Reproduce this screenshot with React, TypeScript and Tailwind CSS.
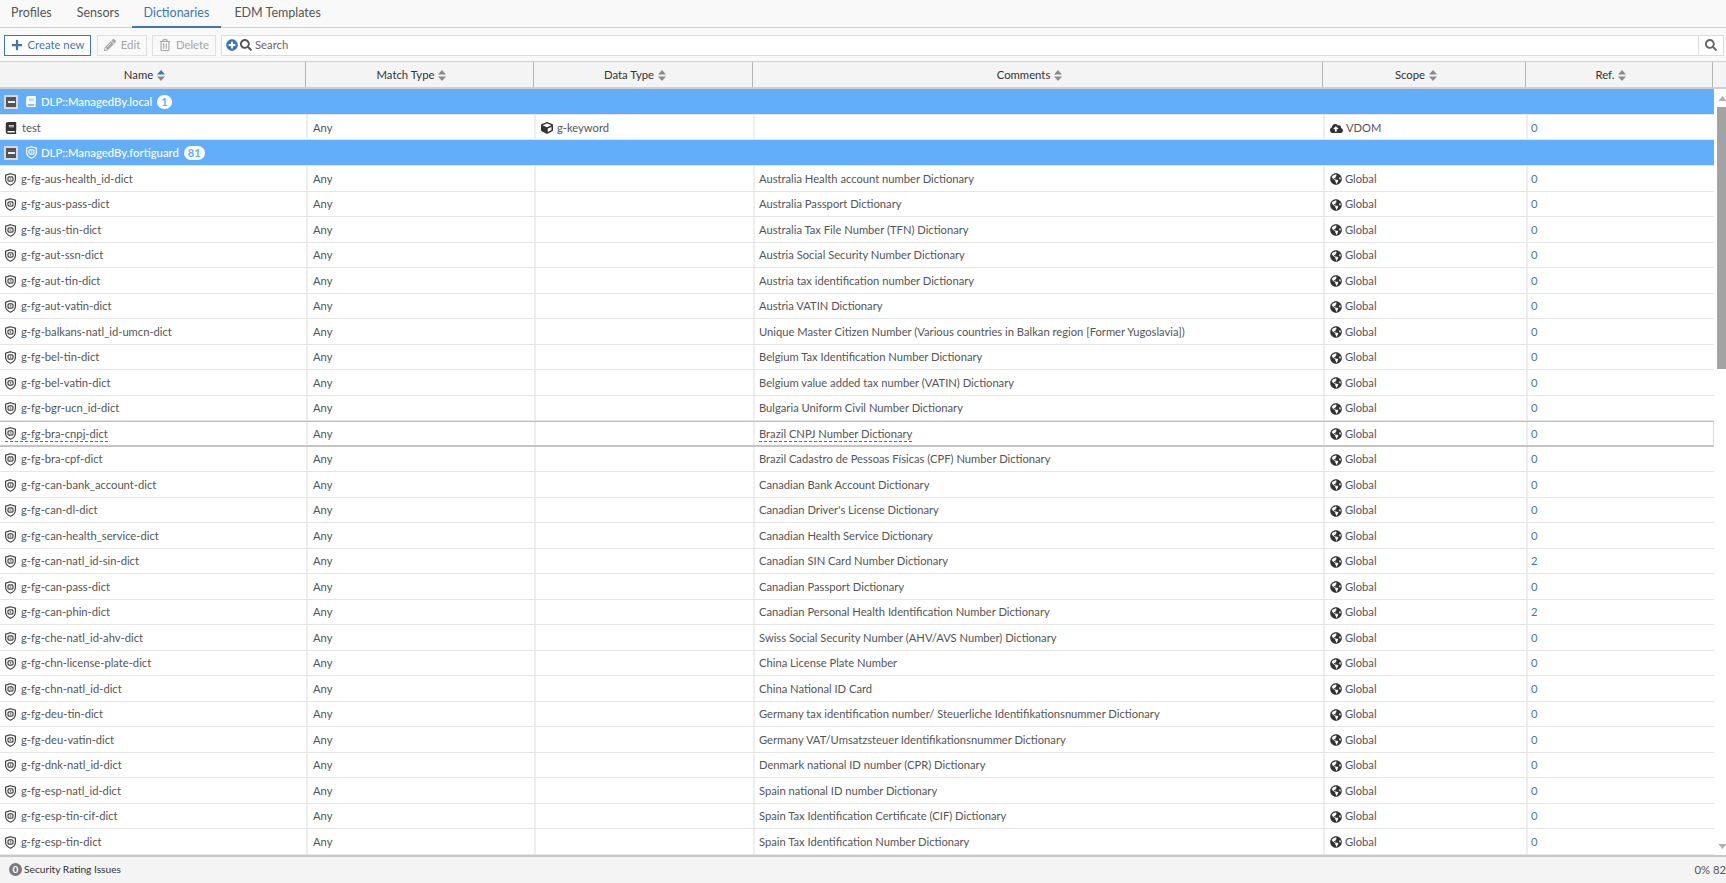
import React from "react";
import { FaPlus, FaPencilAlt, FaRegTrashAlt, FaSearch, FaPlusCircle, FaGlobeAmericas, FaBook, FaCube, FaCloudUploadAlt } from "react-icons/fa";

const rows: [string, string, string?][] = [
  ["g-fg-aus-health_id-dict", "Australia Health account number Dictionary"],
  ["g-fg-aus-pass-dict", "Australia Passport Dictionary"],
  ["g-fg-aus-tin-dict", "Australia Tax File Number (TFN) Dictionary"],
  ["g-fg-aut-ssn-dict", "Austria Social Security Number Dictionary"],
  ["g-fg-aut-tin-dict", "Austria tax identification number Dictionary"],
  ["g-fg-aut-vatin-dict", "Austria VATIN Dictionary"],
  ["g-fg-balkans-natl_id-umcn-dict", "Unique Master Citizen Number (Various countries in Balkan region [Former Yugoslavia])"],
  ["g-fg-bel-tin-dict", "Belgium Tax Identification Number Dictionary"],
  ["g-fg-bel-vatin-dict", "Belgium value added tax number (VATIN) Dictionary"],
  ["g-fg-bgr-ucn_id-dict", "Bulgaria Uniform Civil Number Dictionary"],
  ["g-fg-bra-cnpj-dict", "Brazil CNPJ Number Dictionary"],
  ["g-fg-bra-cpf-dict", "Brazil Cadastro de Pessoas Físicas (CPF) Number Dictionary"],
  ["g-fg-can-bank_account-dict", "Canadian Bank Account Dictionary"],
  ["g-fg-can-dl-dict", "Canadian Driver's License Dictionary"],
  ["g-fg-can-health_service-dict", "Canadian Health Service Dictionary"],
  ["g-fg-can-natl_id-sin-dict", "Canadian SIN Card Number Dictionary", "2"],
  ["g-fg-can-pass-dict", "Canadian Passport Dictionary"],
  ["g-fg-can-phin-dict", "Canadian Personal Health Identification Number Dictionary", "2"],
  ["g-fg-che-natl_id-ahv-dict", "Swiss Social Security Number (AHV/AVS Number) Dictionary"],
  ["g-fg-chn-license-plate-dict", "China License Plate Number"],
  ["g-fg-chn-natl_id-dict", "China National ID Card"],
  ["g-fg-deu-tin-dict", "Germany tax identification number/ Steuerliche Identifikationsnummer Dictionary"],
  ["g-fg-deu-vatin-dict", "Germany VAT/Umsatzsteuer Identifikationsnummer Dictionary"],
  ["g-fg-dnk-natl_id-dict", "Denmark national ID number (CPR) Dictionary"],
  ["g-fg-esp-natl_id-dict", "Spain national ID number Dictionary"],
  ["g-fg-esp-tin-cif-dict", "Spain Tax Identification Certificate (CIF) Dictionary"],
  ["g-fg-esp-tin-dict", "Spain Tax Identification Number Dictionary"],
];

const gridCols = "grid grid-cols-[306px_228px_219px_570px_203px_187px]";

function Sort({ active }: { active?: boolean }) {
  return (
    <svg width="8" height="11" viewBox="0 0 8 11" className="ml-1">
      <path d="M4 0 L8 4.6 H0 Z" fill={active ? "#3f77b0" : "#8a8a8a"} />
      <path d="M4 11 L8 6.4 H0 Z" fill="#8a8a8a" />
    </svg>
  );
}

function Shield({ color = "#444" }: { color?: string }) {
  return (
    <svg width="11" height="13" viewBox="0 0 11 13" className="shrink-0">
      <path d="M5.5 .7 L10.4 2.3 V6.3 C10.4 9.2 8.2 11.2 5.5 12.3 C2.8 11.2 .6 9.2 .6 6.3 V2.3 Z" fill="none" stroke={color} strokeWidth="1.2" />
      <rect x="3" y="3.9" width="5" height="4.2" rx="1" fill="none" stroke={color} strokeWidth="1.2" />
      <rect x="4.8" y="5.4" width="1.4" height="1.2" fill={color} />
    </svg>
  );
}

function Collapse() {
  return (
    <div className="w-[14px] h-[14px] border-2 border-[#d8d8d8] bg-[#555] flex items-center justify-center shrink-0">
      <div className="w-[7px] h-[2px] bg-[#eee]" />
    </div>
  );
}

function Group({ icon, label, count }: { icon: React.ReactNode; label: string; count: string }) {
  return (
    <div className="h-[26px] w-[1714px] bg-[#62aefa] border-b border-[#e6e6e6] flex items-center pl-1 text-white">
      <Collapse />
      <span className="ml-[8px] w-[10px] flex justify-center">{icon}</span>
      <span className="ml-[5px] text-[11.3px] pt-[1px] font-medium">{label}</span>
      <span className="ml-[5px] h-[14px] min-w-[14px] px-[4px] rounded-full bg-white text-[#62aefa] text-[11px] font-bold leading-[14px] text-center">{count}</span>
    </div>
  );
}

function Row({ name, icon, comment, scopeIcon, scope, refCount, dataType, h, hover }: { name: string; icon: React.ReactNode; comment?: string; scopeIcon: React.ReactNode; scope: string; refCount: string; dataType?: React.ReactNode; h: string; hover?: boolean }) {
  const cell = "flex items-center pt-[2px] border-l-2 border-[#eeeeee] overflow-hidden whitespace-nowrap";
  const lined = hover ? "border-b border-dashed border-[#666] leading-[14px]" : "";
  return (
    <div className={`${gridCols} ${h} bg-white text-[#555] text-[11.2px] ${hover ? "w-[1714px] border-t border-r border-b-2 border-t-[#bdbdbd] border-r-[#dcdcdc] border-b-[#c4c4c4]" : "border-b border-[#e6e6e6]"}`}>
      <div className="flex items-center pl-[5px] pt-[2px] overflow-hidden whitespace-nowrap"><span className={`flex items-center gap-[5px] ${lined}`}>{icon}{name}</span></div>
      <div className={`${cell} pl-[5px]`}>Any</div>
      <div className={`${cell} pl-[5px]`}>{dataType}</div>
      <div className={`${cell} pl-[4px]`}><span className={lined}>{comment}</span></div>
      <div className={`${cell} pl-[5px] gap-[3px]`}>{scopeIcon}{scope}</div>
      <div className={`${cell} pl-[3px] text-[#3f77b0]`}>{refCount}</div>
    </div>
  );
}

function Head({ label, active }: { label: string; active?: boolean }) {
  return (
    <div className="flex items-center justify-center pr-[16px] pt-[1px] border-r border-[#b5b5b5] text-[#333] text-[11.3px]">
      {label}<Sort active={active} />
    </div>
  );
}

function Btn({ children, on, w }: { children: React.ReactNode; on?: boolean; w: string }) {
  return (
    <div className={`h-[21px] flex items-center justify-center gap-[5px] border-[1.5px] text-[11.3px] shrink-0 ${w} ${on ? "border-[#3f77b0] text-[#3f77b0] bg-white" : "border-[#e0e0e0] text-[#a5a5a5]"}`}>
      {children}
    </div>
  );
}

export default function App() {
  return (
    <div className="w-[1726px] h-[883px] overflow-hidden bg-[#f9f9f9] flex flex-col font-['Lato',sans-serif] relative">
      <div className="h-[28px] border-b border-[#cfcfcf] flex text-[12.5px] text-[#555] shrink-0">
        <div className="pl-[11px] pr-[13px] flex items-center">Profiles</div>
        <div className="pl-[12px] pr-[12px] flex items-center">Sensors</div>
        <div className="px-[12px] flex items-center text-[#3f77b0] border-b-2 border-[#3f77b0] h-[28px]">Dictionaries</div>
        <div className="px-[13px] flex items-center">EDM Templates</div>
      </div>
      <div className="h-[34px] flex items-center pl-1 pr-[2px] pt-[1px] shrink-0 border-b border-[#cfcfcf]">
        <Btn on w="w-[87px]"><FaPlus size={12} />Create new</Btn>
        <div className="w-[6px]" />
        <Btn w="w-[50px]"><FaPencilAlt size={12} />Edit</Btn>
        <div className="w-[5px]" />
        <Btn w="w-[64px]"><FaRegTrashAlt size={12} />Delete</Btn>
        <div className="w-[5px]" />
        <div className="flex-1 h-[21px] border-[1.5px] border-[#dcdcdc] bg-white flex items-center pl-[4px] text-[11.3px] text-[#666]">
          <FaPlusCircle size={12} className="text-[#3f77b0]" />
          <FaSearch size={12} className="ml-[2px] mr-[3px] text-[#555]" />
          Search
          <div className="ml-auto w-[25px] h-full border-l-[1.5px] border-[#dcdcdc] flex items-center justify-center">
            <FaSearch size={12} className="text-[#666]" />
          </div>
        </div>
      </div>
      <div className="h-[27px] shrink-0 bg-[#f4f4f4] border-b-2 border-[#cfcfcf]">
        <div className={`${gridCols} h-full`}>
          <Head label="Name" active />
          <Head label="Match Type" />
          <Head label="Data Type" />
          <Head label="Comments" />
          <Head label="Scope" />
          <Head label="Ref." />
        </div>
      </div>
      <div className="flex-1 overflow-hidden bg-white relative">
        <Group icon={<FaBook size={11} color="#fff" />} label="DLP::ManagedBy.local" count="1" />
        <Row name="test" icon={<FaBook size={12} color="#333" className="shrink-0" />} dataType={<span className="flex items-center gap-[4px]"><FaCube size={12} color="#333" />g-keyword</span>} scopeIcon={<FaCloudUploadAlt size={13} color="#333" className="shrink-0" />} scope="VDOM" refCount="0" h="h-[25px]" />
        <Group icon={<Shield color="#fff" />} label="DLP::ManagedBy.fortiguard" count="81" />
        {rows.map(([n, c, r]) => (
          <Row key={n} name={n} icon={<Shield />} comment={c} scopeIcon={<FaGlobeAmericas size={12} color="#333" className="shrink-0" />} scope="Global" refCount={r ?? "0"} h="h-[25.5px]" hover={n === "g-fg-bra-cnpj-dict"} />
        ))}
        <div className="absolute right-0 top-0 bottom-0 w-[12px] bg-white overflow-hidden">
          <svg width="9" height="5" viewBox="0 0 10 6" className="absolute left-[4px] top-[7px]"><path d="M5 0 L10 6 H0 Z" fill="#b0b0b0" /></svg>
          <div className="absolute left-[3px] top-[18px] w-[9px] h-[262px] bg-[#a3a3a3]" />
          <svg width="9" height="5" viewBox="0 0 10 6" className="absolute left-[4px] bottom-[6px]"><path d="M5 6 L10 0 H0 Z" fill="#b0b0b0" /></svg>
        </div>
      </div>
      <div className="h-[28px] shrink-0 bg-[#f4f4f4] border-t-2 border-[#c8c8c8] flex items-center justify-between pl-[9px] text-[10.2px] text-[#333]">
        <div className="flex items-center gap-[2px]">
          <span className="w-[13px] h-[13px] rounded-full bg-[#7a7a7a] text-white text-[10px] flex items-center justify-center font-bold">0</span>
          Security Rating Issues
        </div>
        <span className="text-[11.3px] text-[#555]">0% 82</span>
      </div>
    </div>
  );
}
